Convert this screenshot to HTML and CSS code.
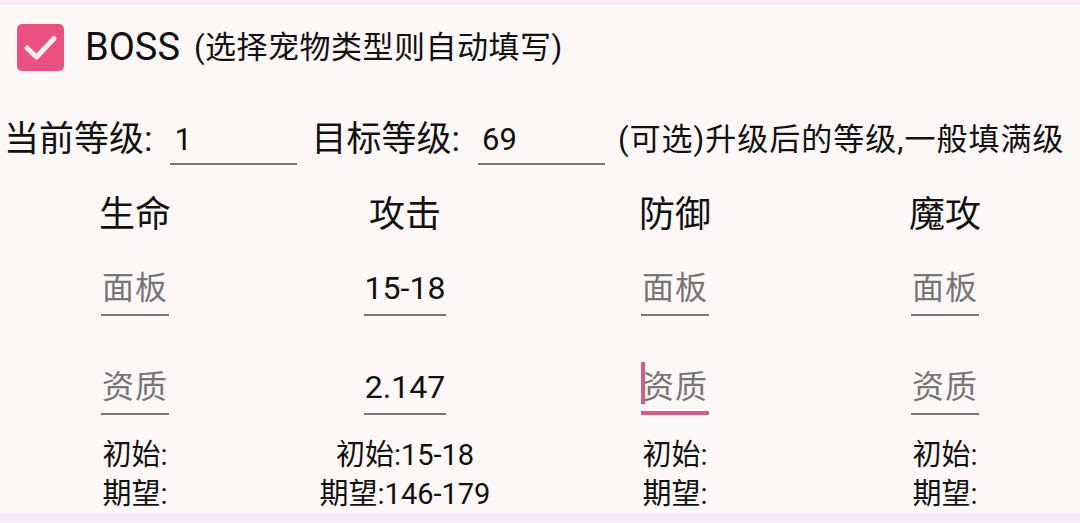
FILE: index.html
```html
<!DOCTYPE html>
<html lang="zh-CN">
<head>
<meta charset="utf-8">
<title>宠物属性</title>
<link rel="stylesheet" href="styles.css">
</head>
<body>
<div class="page">
  <div class="band"></div>
  <div class="boss-row">
    <span class="checkbox">
      <svg width="47" height="47" viewBox="0 0 47 47"><path d="M10 24 L19.5 33 L37 14.5" fill="none" stroke="#fdeef3" stroke-width="5" stroke-linecap="round" stroke-linejoin="round"/></svg>
    </span>
    <span class="boss-label">BOSS</span>
    <span class="boss-hint">(选择宠物类型则自动填写)</span>
  </div>
  <div class="level-row">
    <span class="level-label">当前等级:</span>
    <span class="level-input">1</span>
    <span class="level-label second">目标等级:</span>
    <span class="level-input">69</span>
    <span class="level-hint">(可选)升级后的等级,一般填满级</span>
  </div>
  <div class="stats">
    <div class="col">
      <div class="head">生命</div>
      <div class="field placeholder">面板</div>
      <div class="field placeholder second-row">资质</div>
      <div class="info">初始:</div>
      <div class="info last">期望:</div>
    </div>
    <div class="col">
      <div class="head">攻击</div>
      <div class="field">15-18</div>
      <div class="field second-row">2.147</div>
      <div class="info">初始:15-18</div>
      <div class="info last">期望:146-179</div>
    </div>
    <div class="col">
      <div class="head">防御</div>
      <div class="field placeholder">面板</div>
      <div class="field placeholder second-row focused"><span class="cursor"></span>资质</div>
      <div class="info">初始:</div>
      <div class="info last">期望:</div>
    </div>
    <div class="col">
      <div class="head">魔攻</div>
      <div class="field placeholder">面板</div>
      <div class="field placeholder second-row">资质</div>
      <div class="info">初始:</div>
      <div class="info last">期望:</div>
    </div>
  </div>
  <div class="band bottom"></div>
</div>
</body>
</html>
```
FILE: styles.css
```css
html, body {
  margin: 0;
  padding: 0;
}
body {
  background: #fdf8f8;
  font-family: Roboto, "Noto Sans CJK SC", sans-serif;
  color: #111;
}
.page {
  width: 1080px;
  height: 523px;
  overflow: hidden;
  display: flex;
  flex-direction: column;
}
.band {
  height: 5px;
  background: #f9e8f5;
  flex: none;
}
.band.bottom {
  height: 10px;
}
.boss-row {
  display: flex;
  align-items: center;
  margin-top: 19px;
  padding-left: 17px;
  height: 47px;
}
.checkbox {
  width: 47px;
  height: 47px;
  border-radius: 5px;
  background: #ea5182;
  display: flex;
  flex: none;
}
.boss-label {
  margin-left: 21px;
  font-size: 38px;
  line-height: 47px;
}
.boss-hint {
  margin-left: 14px;
  font-size: 31px;
  letter-spacing: 0.5px;
  line-height: 47px;
}
.level-row {
  display: flex;
  align-items: flex-start;
  margin-top: 47px;
  padding-left: 4px;
}
.level-label {
  font-size: 35px;
  line-height: 43px;
}
.level-label.second {
  margin-left: 14px;
}
.level-input {
  box-sizing: border-box;
  width: 127px;
  height: 47px;
  margin-left: 18px;
  padding-left: 4px;
  font-size: 31px;
  line-height: 43px;
  border-bottom: 2px solid #777;
}
.level-hint {
  margin-left: 13px;
  font-size: 31px;
  letter-spacing: 1px;
  line-height: 43px;
}
.stats {
  display: grid;
  grid-template-columns: repeat(4, 1fr);
  margin-top: 29px;
  flex: 1;
}
.col {
  display: flex;
  flex-direction: column;
  align-items: center;
}
.head {
  font-size: 36px;
  line-height: 42px;
}
.field {
  position: relative;
  margin-top: 32px;
  font-size: 32px;
  line-height: 40px;
  padding: 0 1px 6px;
  border-bottom: 2px solid #777;
}
.field.second-row {
  margin-top: 51px;
}
.field.placeholder {
  color: #767676;
  letter-spacing: 1px;
}
.field.focused {
  padding-bottom: 4px;
  border-bottom: 4px solid #cf5f8b;
}
.cursor {
  position: absolute;
  left: 0;
  top: -5px;
  width: 4px;
  height: 42px;
  background: #cf5f8b;
}
.info {
  margin-top: 20px;
  font-size: 29px;
  line-height: 40px;
}
.info.last {
  margin-top: 0;
  line-height: 38px;
}
```
